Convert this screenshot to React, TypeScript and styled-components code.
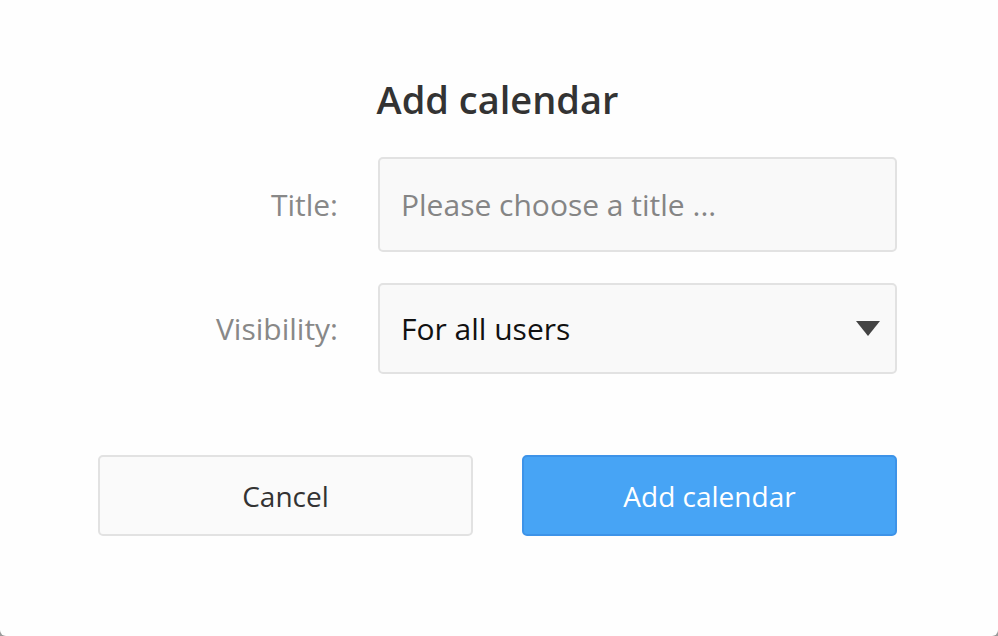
import styled, { createGlobalStyle } from 'styled-components';

const GlobalStyle = createGlobalStyle`
  html, body {
    margin: 0;
    padding: 0;
    background: #9a9a9a;
    font-family: 'Open Sans', 'Noto Sans', sans-serif;
  }
  * { box-sizing: border-box; }
`;

const Modal = styled.div`
  width: 998px;
  height: 636px;
  background: #fefefe;
  border-radius: 0 0 6px 6px;
  display: flex;
  flex-direction: column;
  padding: 75px 101px 0 98px;
`;

const Heading = styled.h2`
  margin: 0 0 34px;
  text-align: center;
  font-size: 38px;
  font-weight: 600;
  color: #333;
  line-height: 48px;
`;

const Form = styled.form`
  display: flex;
  flex-direction: column;
  gap: 31px;
`;

const Row = styled.div`
  display: grid;
  grid-template-columns: 240px 1fr;
  column-gap: 40px;
  align-items: center;
`;

const Label = styled.label`
  text-align: right;
  font-size: 30px;
  color: #888;
`;

const Field = styled.div<{ $height: number }>`
  height: ${p => p.$height}px;
  background: #f9f9f9;
  border: 2px solid #e2e2e2;
  border-radius: 5px;
  display: flex;
  align-items: center;
  justify-content: space-between;
  padding: 0 15px 0 21px;
  font-size: 30px;
`;

const TextInput = styled.input`
  border: none;
  background: transparent;
  outline: none;
  width: 100%;
  font: inherit;
  color: #222;
  padding: 0;
  &::placeholder { color: #858585; }
`;

const SelectValue = styled.span`
  color: #111;
`;

const Caret = styled.span`
  width: 0;
  height: 0;
  border-left: 12px solid transparent;
  border-right: 12px solid transparent;
  border-top: 15px solid #444;
`;

const Actions = styled.div`
  display: flex;
  gap: 49px;
  margin-top: 50px;
`;

const Button = styled.button<{ $primary?: boolean }>`
  flex: 1;
  height: 81px;
  border-radius: 5px;
  font-family: inherit;
  font-size: 28px;
  cursor: pointer;
  border: 2px solid ${p => (p.$primary ? '#3d93e8' : '#e2e2e2')};
  background: ${p => (p.$primary ? '#47a4f5' : '#fafafa')};
  color: ${p => (p.$primary ? '#fff' : '#333')};
`;

export default function App() {
  return (
    <>
      <GlobalStyle />
      <Modal>
        <Heading>Add calendar</Heading>
        <Form onSubmit={e => e.preventDefault()}>
          <Row>
            <Label htmlFor='title'>Title:</Label>
            <Field $height={95}>
              <TextInput id='title' placeholder='Please choose a title ...' />
            </Field>
          </Row>
          <Row>
            <Label>Visibility:</Label>
            <Field $height={91}>
              <SelectValue>For all users</SelectValue>
              <Caret />
            </Field>
          </Row>
          <Actions>
            <Button type='button'>Cancel</Button>
            <Button type='submit' $primary>Add calendar</Button>
          </Actions>
        </Form>
      </Modal>
    </>
  );
}
